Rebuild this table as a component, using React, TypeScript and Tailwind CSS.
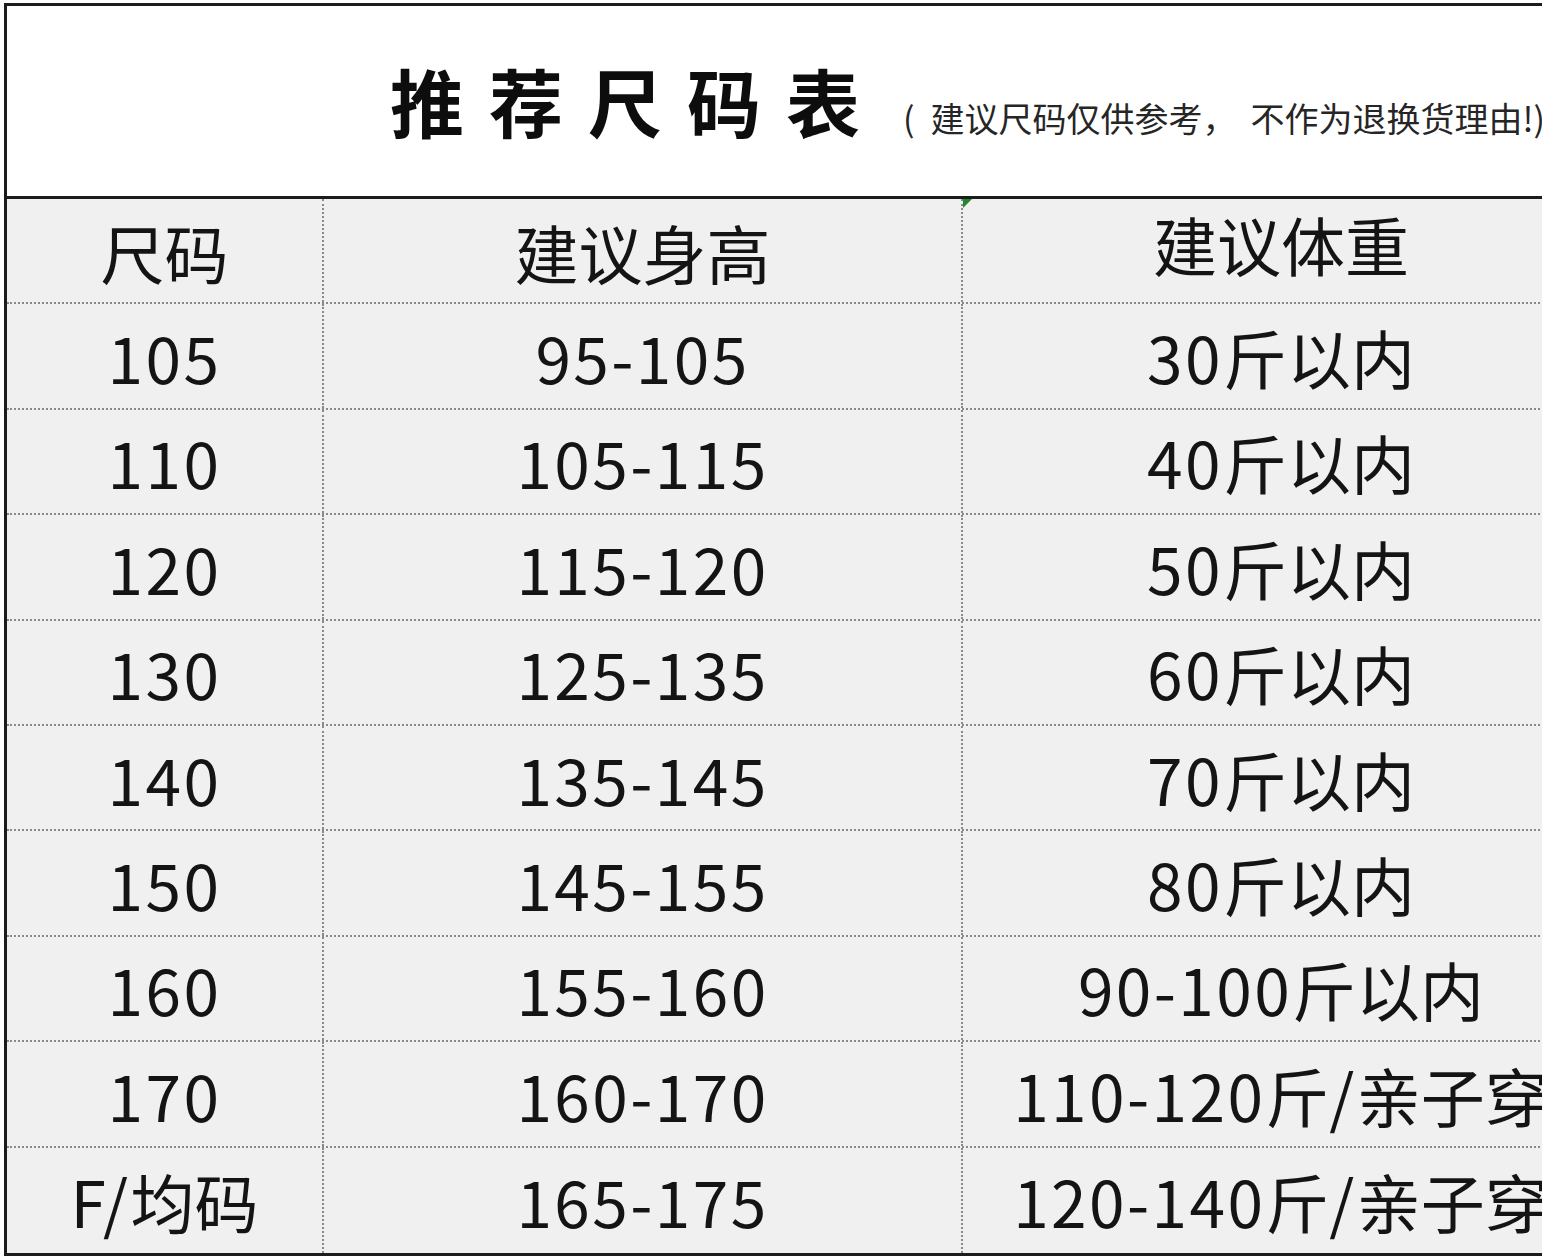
import React from 'react';

const rows: [string, string, string][] = [
  ['105', '95-105', '30斤以内'],
  ['110', '105-115', '40斤以内'],
  ['120', '115-120', '50斤以内'],
  ['130', '125-135', '60斤以内'],
  ['140', '135-145', '70斤以内'],
  ['150', '145-155', '80斤以内'],
  ['160', '155-160', '90-100斤以内'],
  ['170', '160-170', '110-120斤/亲子穿'],
  ['F/均码', '165-175', '120-140斤/亲子穿'],
];

const font = { fontFamily: '"Noto Sans CJK SC", "Noto Sans", sans-serif' };

// latin digits in the sheet are wider than the CJK font's, so space them a bit
function Cell({ text }: { text: string }) {
  const parts = text.match(/[\x00-\x7f]+|[^\x00-\x7f]+/g) || [];
  return (
    <span className="whitespace-nowrap">
      {parts.map((p, i) =>
        /^[\x00-\x7f]/.test(p) ? (
          <span key={i} className="tracking-[2.4px]">
            {p}
          </span>
        ) : (
          <span key={i}>{p}</span>
        )
      )}
    </span>
  );
}

function Row({ cells, header, last }: { cells: [string, string, string]; header?: boolean; last?: boolean }) {
  return (
    <div
      className={`grid grid-cols-[317px_639px_636px] h-[105.4px] bg-[#f0f0f0] ${
        last ? '' : 'border-b-2 border-dotted border-[#8a8a8a]'
      }`}
    >
      <div className="flex items-center justify-center border-r-2 border-dotted border-[#8a8a8a]">
        <Cell text={cells[0]} />
      </div>
      <div className="flex items-center justify-center border-r-2 border-dotted border-[#8a8a8a]">
        <Cell text={cells[1]} />
      </div>
      <div className="relative flex items-center justify-center">
        {header && (
          <div className="absolute left-0 top-0 h-0 w-0 border-t-[9px] border-r-[9px] border-t-[#1f8a2c] border-r-transparent" />
        )}
        <span className={header ? '-mt-[16px]' : ''}>
          <Cell text={cells[2]} />
        </span>
      </div>
    </div>
  );
}

export default function App() {
  return (
    <div className="w-[1542px] h-[1259px] overflow-hidden bg-white" style={font}>
      <div className="ml-[4px] mt-[3px] w-[1598px] border-[3px] border-[#1c1c1c]">
        <div className="flex h-[190px] items-baseline bg-white pl-[383px] pt-[57px]">
          <span className="text-[74px] font-bold leading-none tracking-[25px] text-[#0d0d0d]">推荐尺码表</span>
          <span className="ml-[18px] whitespace-nowrap text-[34px] leading-none text-[#262626]">
            (<span className="ml-[16px]">建议尺码仅供参考，</span>
            <span className="ml-[14px]">不作为退换货理由!)</span>
          </span>
        </div>
        <div className="border-t-[3px] border-[#1c1c1c] text-[64px] leading-none text-[#141414]">
          <Row cells={['尺码', '建议身高', '建议体重']} header />
          {rows.map((r, i) => (
            <Row key={r[0]} cells={r} last={i === rows.length - 1} />
          ))}
        </div>
      </div>
    </div>
  );
}
